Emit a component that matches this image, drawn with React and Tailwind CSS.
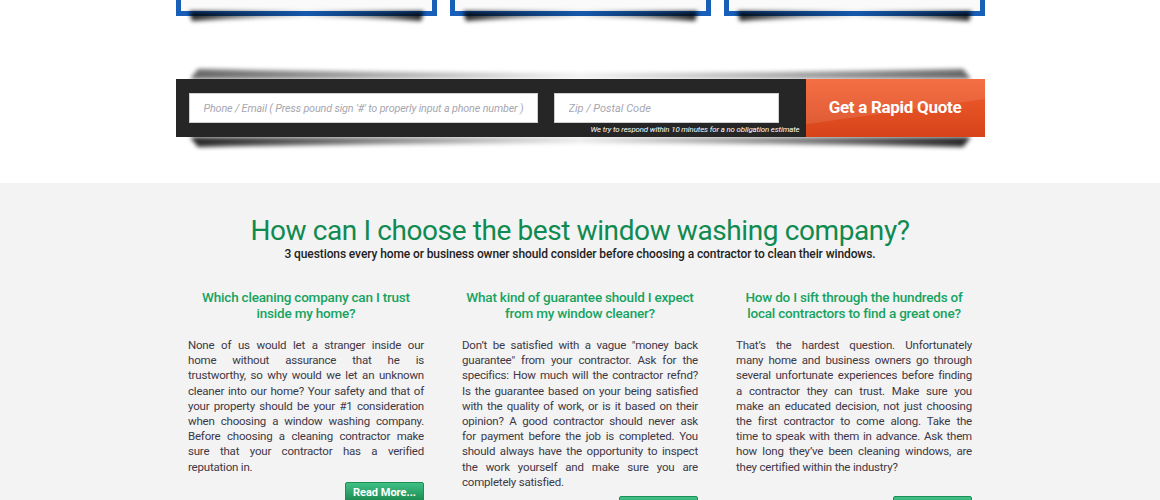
import React from 'react'

const columns = [
  {
    title: ['Which cleaning company can I trust', 'inside my home?'],
    lines: [
      'None of us would let a stranger inside our',
      'home without assurance that he is',
      'trustworthy, so why would we let an unknown',
      'cleaner into our home? Your safety and that of',
      'your property should be your #1 consideration',
      'when choosing a window washing company.',
      'Before choosing a cleaning contractor make',
      'sure that your contractor has a verified',
      'reputation in.',
    ],
    gap: 'mt-[7px]',
  },
  {
    title: ['What kind of guarantee should I expect', 'from my window cleaner?'],
    lines: [
      'Don\u2019t be satisfied with a vague "money back',
      'guarantee" from your contractor. Ask for the',
      'specifics: How much will the contractor refnd?',
      'Is the guarantee based on your being satisfied',
      'with the quality of work, or is it based on their',
      'opinion? A good contractor should never ask',
      'for payment before the job is completed. You',
      'should always have the opportunity to inspect',
      'the work yourself and make sure you are',
      'completely satisfied.',
    ],
    gap: 'mt-[6px]',
  },
  {
    title: ['How do I sift through the hundreds of', 'local contractors to find a great one?'],
    lines: [
      'That\u2019s the hardest question. Unfortunately',
      'many home and business owners go through',
      'several unfortunate experiences before finding',
      'a contractor they can trust. Make sure you',
      'make an educated decision, not just choosing',
      'the first contractor to come along. Take the',
      'time to speak with them in advance. Ask them',
      'how long they\u2019ve been cleaning windows, are',
      'they certified within the industry?',
    ],
    gap: 'mt-[21px]',
  },
]

// curved "lifted corners" shadow under a box
function LiftShadow({ top }) {
  return (
    <svg
      viewBox="0 0 100 10"
      preserveAspectRatio="none"
      className={`absolute left-[6px] right-[6px] w-[calc(100%-12px)] h-[11px] blur-[2px] pointer-events-none ${top ? 'bottom-full rotate-180 opacity-70' : 'top-full'}`}
    >
      <defs>
        <linearGradient id={top ? 'lsT' : 'lsB'} x1="0" x2="1" y1="0" y2="0">
          <stop offset="0" stopColor="#000" stopOpacity="0.85" />
          <stop offset="0.5" stopColor="#000" stopOpacity="0.08" />
          <stop offset="1" stopColor="#000" stopOpacity="0.85" />
        </linearGradient>
      </defs>
      <path d="M1,0 L99,0 L98,9 Q50,2 2,9 Z" fill={`url(#${top ? 'lsT' : 'lsB'})`} />
    </svg>
  )
}

export default function App() {
  return (
    <div className="bg-white font-['Roboto',sans-serif] min-h-[500px]">
      {/* Cards (bottoms only visible) */}
      <div className="w-[809px] mx-auto grid grid-cols-3 gap-[13px]">
        {[0, 1, 2].map(i => (
          <div key={i} className="relative h-4 bg-[#fafafa] border-x-[5px] border-b-[5px] border-[#175fb8]">
            <LiftShadow />
          </div>
        ))}
      </div>

      {/* Quote bar */}
      <div className="relative w-[809px] h-[58px] mx-auto mt-[63px] flex">
        <LiftShadow top />
        <LiftShadow />
        <div className="relative flex-1 bg-[#262626] flex items-start gap-4 pl-[13px] pt-[14px]">
          <input
            className="w-[349px] h-[30px] bg-white border border-[#cfcfcf] pl-[14px] pr-[2px] text-[10.8px] tracking-[-0.15px] placeholder:italic placeholder:text-[#a6a6b0] outline-none"
            placeholder="Phone / Email ( Press pound sign '#' to properly input a phone number )"
          />
          <input
            className="w-[225px] h-[30px] bg-white border border-[#cfcfcf] px-[14px] text-[11px] placeholder:italic placeholder:text-[#a6a6b0] outline-none"
            placeholder="Zip / Postal Code"
          />
          <span className="absolute right-[6px] bottom-[3px] text-[7.8px] italic text-white tracking-[-0.1px] leading-none">
            We try to respond within 10 minutes for a no obligation estimate
          </span>
        </div>
        <button className="relative w-[179px] overflow-hidden bg-linear-to-b from-[#f35f2e] to-[#d6431a] text-white font-bold text-[17px] tracking-[-0.3px]">
          <span className="absolute -left-6 -top-10 w-[260px] h-[70px] bg-white/10 -rotate-[8deg]" />
          <span className="relative">Get a Rapid Quote</span>
        </button>
      </div>

      {/* Info section */}
      <div className="mt-[46px] bg-[#f3f3f3] pt-[32px] pb-10">
        <h2 className="text-center text-[28px] leading-[32px] text-[#0f8a50] tracking-[-0.4px]">
          How can I choose the best window washing company?
        </h2>
        <p className="text-center text-[12px] leading-[14px] font-medium text-[#222] tracking-[-0.1px]">
          3 questions every home or business owner should consider before choosing a contractor to clean their windows.
        </p>

        <div className="w-[784px] mx-auto mt-[28px] grid grid-cols-3 gap-[38px]">
          {columns.map((col, i) => (
            <div key={i} className="flex flex-col">
              <h3 className="text-center text-[13.5px] leading-4 font-medium text-[#17a35f] tracking-[-0.2px]">
                {col.title.map((t, j) => <div key={j}>{t}</div>)}
              </h3>
              <div className="mt-[17px] text-[11.5px] leading-[15.2px] text-[#3d3846] tracking-[-0.2px]">
                {col.lines.map((l, j) => (
                  <div
                    key={j}
                    className={`whitespace-nowrap text-justify ${j < col.lines.length - 1 ? '[text-align-last:justify]' : ''}`}
                  >
                    {l}
                  </div>
                ))}
              </div>
              <div className={`${col.gap} flex justify-end`}>
                <button className="w-[79px] h-[22px] rounded-[2px] border border-[#1d8f55] bg-linear-to-b from-[#40c086] to-[#15854b] text-white text-[11px] font-bold">
                  Read More...
                </button>
              </div>
            </div>
          ))}
        </div>
      </div>
    </div>
  )
}
